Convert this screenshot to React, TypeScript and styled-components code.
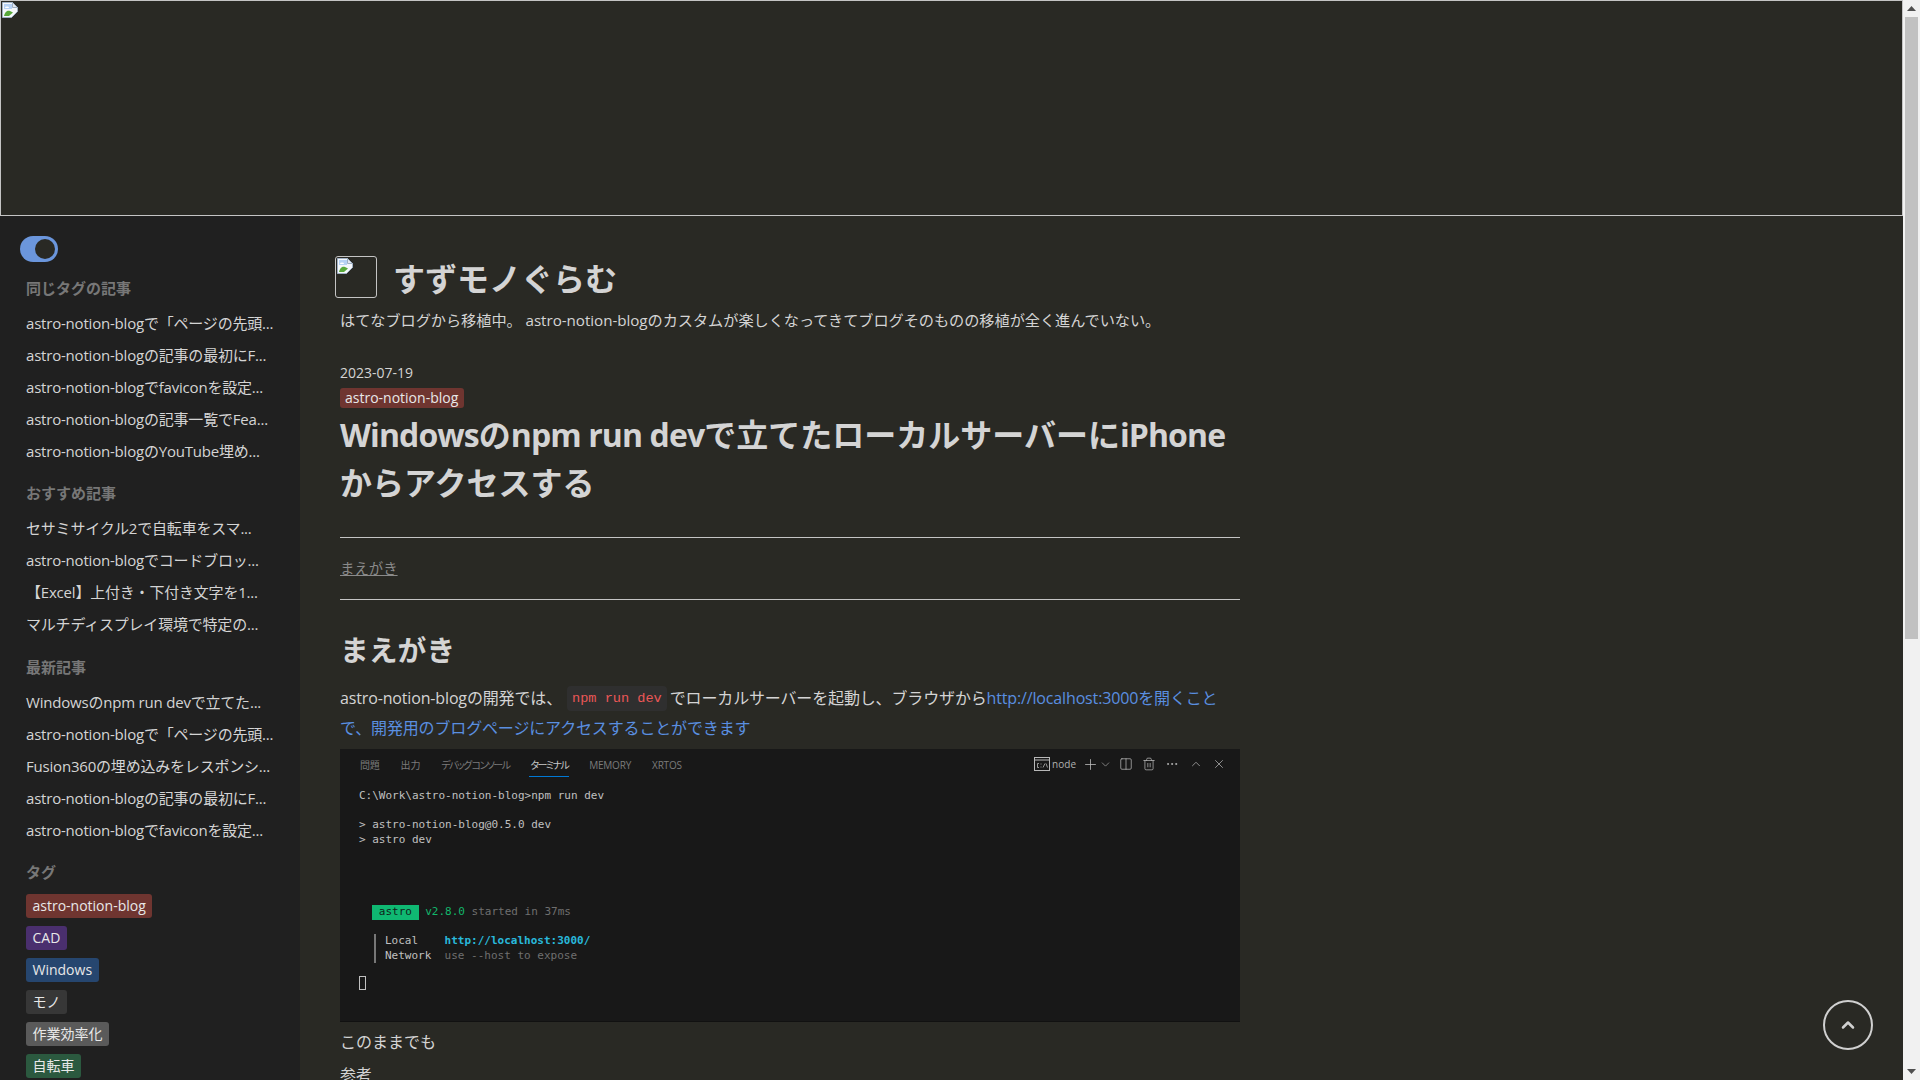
import React from "react";
import styled, { createGlobalStyle } from "styled-components";
import { ChevronDown, ChevronUp, Columns2, Ellipsis, Plus, Trash2, X } from "lucide-react";

const GlobalStyle = createGlobalStyle`
  html, body {
    margin: 0;
    height: 100%;
    overflow: hidden;
  }
  body {
    background: #292924;
    color: #d4d4d4;
    font-family: "Open Sans", "Noto Sans CJK JP", sans-serif;
  }
`;

const TAG_COLORS: Record<string, string> = {
  brown: "#6f3530",
  purple: "#4a2f6e",
  blue: "#26466f",
  default: "#373737",
  gray: "#5a5a5a",
  green: "#2b593f",
};

const sections = [
  {
    title: "同じタグの記事",
    items: [
      "astro-notion-blogで「ページの先頭...",
      "astro-notion-blogの記事の最初にF...",
      "astro-notion-blogでfaviconを設定...",
      "astro-notion-blogの記事一覧でFea...",
      "astro-notion-blogのYouTube埋め...",
    ],
  },
  {
    title: "おすすめ記事",
    items: [
      "セサミサイクル2で自転車をスマ...",
      "astro-notion-blogでコードブロッ...",
      "【Excel】上付き・下付き文字を1...",
      "マルチディスプレイ環境で特定の...",
    ],
  },
  {
    title: "最新記事",
    items: [
      "Windowsのnpm run devで立てた...",
      "astro-notion-blogで「ページの先頭...",
      "Fusion360の埋め込みをレスポンシ...",
      "astro-notion-blogの記事の最初にF...",
      "astro-notion-blogでfaviconを設定...",
    ],
  },
];

const tags = [
  { name: "astro-notion-blog", color: "brown" },
  { name: "CAD", color: "purple" },
  { name: "Windows", color: "blue" },
  { name: "モノ", color: "default" },
  { name: "作業効率化", color: "gray" },
  { name: "自転車", color: "green" },
];

const terminalTabs = [
  { label: "問題" },
  { label: "出力" },
  { label: "デバッグ コンソール", tight: true },
  { label: "ターミナル", tight: true, active: true },
  { label: "MEMORY" },
  { label: "XRTOS" },
];

const Shell = styled.div`
  display: flex;
  height: 100vh;
  overflow: hidden;
`;

const Page = styled.div`
  flex: 1;
  min-width: 0;
  display: flex;
  flex-direction: column;
`;

const Banner = styled.div`
  height: 216px;
  flex-shrink: 0;
  box-sizing: border-box;
  padding: 1px;
  border: 1px solid #c4c4c4;
`;

const Columns = styled.div`
  flex: 1;
  min-height: 0;
  display: flex;
`;

const Sidebar = styled.aside`
  width: 300px;
  flex-shrink: 0;
  box-sizing: border-box;
  padding: 20px 0 0 26px;
  background: #202020;
  overflow: hidden;
`;

const Toggle = styled.div`
  width: 38px;
  height: 26px;
  margin-left: -6px;
  box-sizing: border-box;
  padding: 3px 3px 3px 15px;
  border-radius: 13px;
  background: #6b96dc;
`;

const ToggleKnob = styled.div`
  width: 20px;
  height: 20px;
  border-radius: 50%;
  background: #292924;
`;

const SideSection = styled.section`
  margin-top: 15.5px;
`;

const SideTitle = styled.div`
  font-size: 15px;
  line-height: 20px;
  font-weight: 700;
  color: #777;
`;

const SideList = styled.div`
  margin-top: 9px;
  padding-bottom: 1px;
`;

const SideItem = styled.div`
  height: 32px;
  line-height: 32px;
  font-size: 15px;
  letter-spacing: -0.2px;
  white-space: nowrap;
  color: #d4d4d4;
`;

const TagList = styled.div`
  margin-top: 12px;
  display: flex;
  flex-direction: column;
  align-items: flex-start;
  gap: 8px;
`;

const Tag = styled.span<{ $color: string }>`
  display: block;
  height: 24px;
  line-height: 24px;
  padding: 0 6.5px;
  border-radius: 3px;
  font-size: 14px;
  color: #e8e8e8;
  background: ${(p) => TAG_COLORS[p.$color]};
`;

const Main = styled.main`
  flex: 1;
  min-width: 0;
  box-sizing: border-box;
  padding: 40px 0 0 40px;
  overflow: hidden;
`;

const Column = styled.div`
  width: 900px;
`;

const BlogHead = styled.div`
  height: 42px;
  display: flex;
  align-items: center;
  gap: 16px;
  margin-left: -5px;
`;

const LogoBox = styled.div`
  width: 42px;
  height: 42px;
  flex-shrink: 0;
  box-sizing: border-box;
  border: 1px solid #c4c4c4;
  border-radius: 3px;
  padding: 1px;
`;

const BlogName = styled.div`
  margin-top: 4px;
  font-size: 32px;
  line-height: 42px;
  font-weight: 700;
`;

const BlogDescription = styled.div`
  margin-top: 12px;
  font-size: 15.2px;
  line-height: 20px;
  letter-spacing: -0.05px;
`;

const PostDate = styled.div`
  margin-top: 33px;
  font-size: 14px;
  line-height: 20px;
`;

const PostTag = styled.span`
  display: inline-block;
  margin-top: 5px;
  height: 20px;
  line-height: 20px;
  padding: 0 6px 0 5px;
  border-radius: 3px;
  font-size: 14px;
  color: #e8e8e8;
  background: ${TAG_COLORS.brown};
  vertical-align: top;
`;

const PostTitle = styled.h1`
  margin: 3px 0 0;
  font-size: 32px;
  line-height: 48px;
  font-weight: 700;
`;

const TitleLatin = styled.span`
  letter-spacing: -0.9px;
`;

const Rule = styled.hr<{ $gap: number }>`
  margin: ${(p) => p.$gap}px 0 0;
  border: 0;
  border-top: 1px solid #c4c4c4;
`;

const TocLink = styled.a`
  display: block;
  margin-top: 21px;
  font-size: 14.4px;
  line-height: 20px;
  color: #8a8a8a;
  text-decoration: underline;
`;

const SectionHeading = styled.h2`
  margin: 30px 0 0;
  font-size: 28.8px;
  line-height: 40px;
  font-weight: 700;
`;

const Paragraph = styled.p`
  margin: 13px 0 0;
  font-size: 16px;
  line-height: 30px;
  letter-spacing: -0.15px;
`;

const InlineCode = styled.code`
  display: inline-block;
  height: 25px;
  line-height: 25px;
  margin: 0 3px 0 1px;
  padding: 0 5px;
  border-radius: 4px;
  background: #2f2f2f;
  color: #eb5757;
  font-family: "Liberation Mono", monospace;
  font-size: 13.6px;
  letter-spacing: 0;
  vertical-align: top;
  position: relative;
  top: 3px;
`;

const TextLink = styled.a`
  color: #5a8fe0;
`;

const Terminal = styled.div`
  margin-top: 6px;
  height: 273px;
  box-sizing: border-box;
  padding-left: 19px;
  background: #181818;
  border-bottom: 1px solid #111;
`;

const TerminalBar = styled.div`
  height: 28px;
  display: flex;
  align-items: stretch;
  justify-content: space-between;
  padding-right: 14px;
`;

const TerminalTabs = styled.div`
  display: flex;
  gap: 19px;
`;

const TerminalTab = styled.div<{ $active?: boolean; $tight?: boolean }>`
  font-size: 10px;
  line-height: 33px;
  padding: 0 1px;
  letter-spacing: ${(p) => (p.$tight ? "-1.6px" : "-0.2px")};
  font-feature-settings: "palt";
  color: ${(p) => (p.$active ? "#c8c8c8" : "#7b7b7b")};
  border-bottom: 1px solid ${(p) => (p.$active ? "#0078d4" : "transparent")};
`;

const TerminalActions = styled.div`
  display: flex;
  align-items: center;
  padding-top: 2px;
  color: #c0c0c0;
`;

const ShellName = styled.span`
  margin: 0 6px 0 2px;
  font-size: 10px;
  color: #b0b0b0;
`;

const ActionIcon = styled.span<{ $gap: number }>`
  display: flex;
  margin-left: ${(p) => p.$gap}px;
`;

const TerminalBody = styled.div`
  margin-top: 12px;
  font-family: "DejaVu Sans Mono", monospace;
  font-size: 11px;
  color: #c0c0c0;
`;

const TermLine = styled.div`
  height: 14.5px;
  line-height: 14.5px;
  white-space: pre;
`;

const TermBlank = styled.div<{ $lines: number }>`
  height: ${(p) => p.$lines * 14.5}px;
`;

const AstroBadge = styled.span`
  display: inline-block;
  background: #0fb872;
  color: #10231a;
`;

const TermGreen = styled.span`
  color: #12b76a;
`;

const TermDim = styled.span`
  color: #6f6f6f;
`;

const TermUrl = styled.span`
  color: #29b8db;
  font-weight: 700;
`;

const TermServer = styled.div`
  margin-left: 15px;
  padding-left: 9px;
  border-left: 2px solid #777;
`;

const TermCursor = styled.span`
  display: block;
  width: 7px;
  height: 14px;
  margin-top: -2px;
  box-sizing: border-box;
  border: 1px solid #c0c0c0;
`;

const AfterText = styled.p<{ $gap: number }>`
  margin: ${(p) => p.$gap}px 0 0;
  font-size: 16px;
  line-height: 24px;
`;

const Scrollbar = styled.div`
  width: 17px;
  flex-shrink: 0;
  display: flex;
  flex-direction: column;
  align-items: center;
  background: #f1f1f1;
`;

const ScrollButton = styled.div`
  height: 17px;
  flex-shrink: 0;
  display: flex;
  align-items: center;
  justify-content: center;
`;

const ScrollThumb = styled.div`
  width: 13px;
  height: 622px;
  background: #c1c1c1;
`;

const ScrollRest = styled.div`
  flex: 1;
`;

const BackToTop = styled.button`
  position: fixed;
  right: 47px;
  bottom: 30px;
  width: 50px;
  height: 50px;
  box-sizing: border-box;
  padding: 0;
  display: flex;
  align-items: center;
  justify-content: center;
  border: 2px solid #d0d0d0;
  border-radius: 50%;
  background: transparent;
  color: #d0d0d0;
`;

const BrokenImage = () => (
  <svg width="16" height="16" viewBox="0 0 16 16" style={{ display: "block" }}>
    <path d="M0.5 0.5h10l5 5v4l-6 6H0.5z" fill="#f4f7fb" stroke="#9fb0c4" strokeWidth="1" />
    <path d="M10.5 0.5v5h5z" fill="#e3e8ef" stroke="#9fb0c4" strokeWidth="1" />
    <path d="M2 2h8v5H2z" fill="#b7d2f5" />
    <path d="M3 6a2 1.4 0 0 1 4 0z" fill="#fff" />
    <path d="M2 14c1-5 4-6 6-5l3 1.5L7 14z" fill="#58a83a" />
    <path d="M10 16l6-6v6z" fill="#292924" />
  </svg>
);

const ShellIcon = () => (
  <svg width="16" height="14" viewBox="0 0 16 14" fill="none" stroke="#b8b8b8" strokeWidth="1">
    <rect x="0.5" y="0.5" width="15" height="13" />
    <path d="M0.5 3h15" />
    <path d="M5 6.5H3.5v4H5M7 6.5v1M7 9.5v1M9 10.5l2-4M12 6.5l1.5 4" strokeWidth="0.8" />
  </svg>
);

const Arrow = ({ down }: { down?: boolean }) => (
  <svg width="9" height="5" viewBox="0 0 9 5">
    <path d={down ? "M0 0h9L4.5 5z" : "M0 5h9L4.5 0z"} fill="#505050" />
  </svg>
);

export default function App() {
  return (
    <>
      <GlobalStyle />
      <Shell>
        <Page>
          <Banner>
            <BrokenImage />
          </Banner>
          <Columns>
            <Sidebar>
              <Toggle>
                <ToggleKnob />
              </Toggle>
              {sections.map((section) => (
                <SideSection key={section.title}>
                  <SideTitle>{section.title}</SideTitle>
                  <SideList>
                    {section.items.map((item) => (
                      <SideItem key={item}>{item}</SideItem>
                    ))}
                  </SideList>
                </SideSection>
              ))}
              <SideSection>
                <SideTitle>タグ</SideTitle>
                <TagList>
                  {tags.map((tag) => (
                    <Tag key={tag.name} $color={tag.color}>
                      {tag.name}
                    </Tag>
                  ))}
                </TagList>
              </SideSection>
            </Sidebar>
            <Main>
              <Column>
                <BlogHead>
                  <LogoBox>
                    <BrokenImage />
                  </LogoBox>
                  <BlogName>すずモノぐらむ</BlogName>
                </BlogHead>
                <BlogDescription>
                  はてなブログから移植中。 astro-notion-blogのカスタムが楽しくなってきてブログそのものの移植が全く進んでいない。
                </BlogDescription>
                <PostDate>2023-07-19</PostDate>
                <PostTag>astro-notion-blog</PostTag>
                <PostTitle>
                  <TitleLatin>Windows</TitleLatin>の<TitleLatin>npm run dev</TitleLatin>で立てたローカルサーバーに
                  <TitleLatin>iPhone</TitleLatin>
                  <br />
                  からアクセスする
                </PostTitle>
                <Rule $gap={30} />
                <TocLink>まえがき</TocLink>
                <Rule $gap={20} />
                <SectionHeading>まえがき</SectionHeading>
                <Paragraph>
                  astro-notion-blogの開発では、 <InlineCode>npm run dev</InlineCode>でローカルサーバーを起動し、ブラウザから
                  <TextLink>
                    http://localhost:3000を開くこと
                    <br />
                    で、開発用のブログページにアクセスすることができます
                  </TextLink>
                </Paragraph>
                <Terminal>
                  <TerminalBar>
                    <TerminalTabs>
                      {terminalTabs.map((tab) => (
                        <TerminalTab key={tab.label} $active={tab.active} $tight={tab.tight}>
                          {tab.label}
                        </TerminalTab>
                      ))}
                    </TerminalTabs>
                    <TerminalActions>
                      <ShellIcon />
                      <ShellName>node</ShellName>
                      <Plus size={17} strokeWidth={1.1} />
                      <ChevronDown size={13} strokeWidth={1.1} />
                      <ActionIcon $gap={7}>
                        <Columns2 size={14} strokeWidth={1.2} />
                      </ActionIcon>
                      <ActionIcon $gap={9}>
                        <Trash2 size={14} strokeWidth={1.2} />
                      </ActionIcon>
                      <ActionIcon $gap={9}>
                        <Ellipsis size={14} strokeWidth={1.4} />
                      </ActionIcon>
                      <ActionIcon $gap={10}>
                        <ChevronUp size={14} strokeWidth={1.2} />
                      </ActionIcon>
                      <ActionIcon $gap={9}>
                        <X size={14} strokeWidth={1.2} />
                      </ActionIcon>
                    </TerminalActions>
                  </TerminalBar>
                  <TerminalBody>
                    <TermLine>{"C:\\Work\\astro-notion-blog>npm run dev"}</TermLine>
                    <TermBlank $lines={1} />
                    <TermLine>{"> astro-notion-blog@0.5.0 dev"}</TermLine>
                    <TermLine>{"> astro dev"}</TermLine>
                    <TermBlank $lines={4} />
                    <TermLine>
                      {"  "}
                      <AstroBadge>{" astro "}</AstroBadge>
                      <TermGreen>{" v2.8.0"}</TermGreen>
                      <TermDim>{" started in 37ms"}</TermDim>
                    </TermLine>
                    <TermBlank $lines={1} />
                    <TermServer>
                      <TermLine>
                        {"Local    "}
                        <TermUrl>http://localhost:3000/</TermUrl>
                      </TermLine>
                      <TermLine>
                        {"Network  "}
                        <TermDim>use --host to expose</TermDim>
                      </TermLine>
                    </TermServer>
                    <TermBlank $lines={1} />
                    <TermCursor />
                  </TerminalBody>
                </Terminal>
                <AfterText $gap={8}>このままでも</AfterText>
                <AfterText $gap={9}>参考</AfterText>
              </Column>
            </Main>
          </Columns>
        </Page>
        <Scrollbar>
          <ScrollButton>
            <Arrow />
          </ScrollButton>
          <ScrollThumb />
          <ScrollRest />
          <ScrollButton>
            <Arrow down />
          </ScrollButton>
        </Scrollbar>
        <BackToTop aria-label="ページの先頭へ">
          <ChevronUp size={20} strokeWidth={3} />
        </BackToTop>
      </Shell>
    </>
  );
}
